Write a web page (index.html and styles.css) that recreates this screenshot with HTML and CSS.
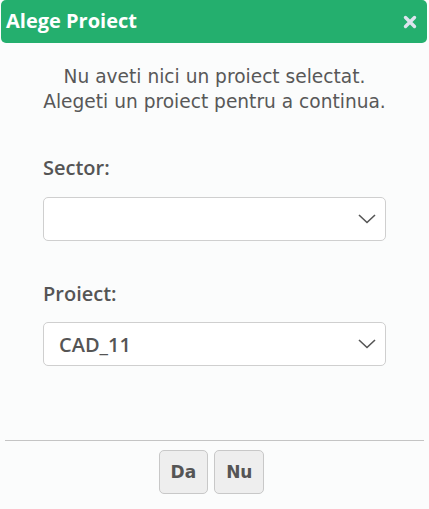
FILE: index.html
```html
<!DOCTYPE html>
<html lang="ro">
<head>
<meta charset="utf-8">
<title>Alege Proiect</title>
<link rel="stylesheet" href="styles.css">
</head>
<body>
<div class="dialog">
  <div class="titlebar">
    <span class="title">Alege Proiect</span>
    <span class="close" aria-label="close">
      <svg width="14" height="14" viewBox="0 0 14 14"><path d="M2.5 2.5 L11.5 11.5 M11.5 2.5 L2.5 11.5" stroke="#dde4ee" stroke-width="3.4" stroke-linecap="round"/></svg>
    </span>
  </div>
  <div class="content">
    <p class="message">Nu aveti nici un proiect selectat.<br>Alegeti un proiect pentru a continua.</p>
    <div class="field">
      <label class="label">Sector:</label>
      <div class="select"><span class="value"></span>
        <svg class="chev" width="18" height="10" viewBox="0 0 18 10"><path d="M1 1 L9 8.5 L17 1" fill="none" stroke="#555" stroke-width="1.6"/></svg>
      </div>
    </div>
    <div class="field">
      <label class="label">Proiect:</label>
      <div class="select"><span class="value">CAD_11</span>
        <svg class="chev" width="18" height="10" viewBox="0 0 18 10"><path d="M1 1 L9 8.5 L17 1" fill="none" stroke="#555" stroke-width="1.6"/></svg>
      </div>
    </div>
  </div>
  <div class="footer">
    <button class="btn">Da</button>
    <button class="btn">Nu</button>
  </div>
</div>
</body>
</html>
```

FILE: styles.css
```css
html, body {
  margin: 0;
  padding: 0;
  background: #fbfcfc;
}
.dialog {
  width: 429px;
  height: 509px;
  display: flex;
  flex-direction: column;
}
.titlebar {
  margin: 0 2px 0 1px;
  height: 43px;
  background: #24af6e;
  border-radius: 5px;
  display: flex;
  align-items: center;
  justify-content: space-between;
  padding: 0 10px 0 5px;
}
.title {
  font-family: "Open Sans", sans-serif;
  font-weight: 700;
  font-size: 20px;
  color: #fff;
  margin-top: -3px;
}
.close {
  display: flex;
  width: 14px;
  height: 14px;
}
.content {
  padding: 21px 20px 0 20px;
  flex: 1;
}
.message {
  margin: 0;
  text-align: center;
  font-family: "DejaVu Sans", sans-serif;
  font-size: 18.6px;
  line-height: 25px;
  color: #585858;
}
.field {
  margin: 42px 23px 0;
  display: flex;
  flex-direction: column;
  gap: 17px;
}
.field + .field {
  margin-top: 41px;
  gap: 16px;
}
.label {
  font-family: "Open Sans", sans-serif;
  font-weight: 600;
  font-size: 20px;
  line-height: 24px;
  color: #555;
}
.select {
  height: 44px;
  box-sizing: border-box;
  border: 1px solid #cfcfcf;
  border-radius: 5px;
  background: #fff;
  display: flex;
  align-items: center;
  justify-content: space-between;
  padding: 0 9px 0 15px;
}
.value {
  font-family: "Open Sans", sans-serif;
  font-weight: 600;
  font-size: 20px;
  color: #555;
}
.chev {
  display: block;
}
.footer {
  margin: 0 5px;
  border-top: 1px solid #c4c4c4;
  padding: 9px 6px 15px 0;
  display: flex;
  justify-content: center;
  gap: 6px;
}
.btn {
  height: 44px;
  min-width: 48px;
  padding: 0 11px;
  background: #eeeeee;
  border: 1px solid #c8c8c8;
  border-radius: 5px;
  font-family: "DejaVu Sans", sans-serif;
  font-weight: 700;
  font-size: 17px;
  color: #555;
}
```
